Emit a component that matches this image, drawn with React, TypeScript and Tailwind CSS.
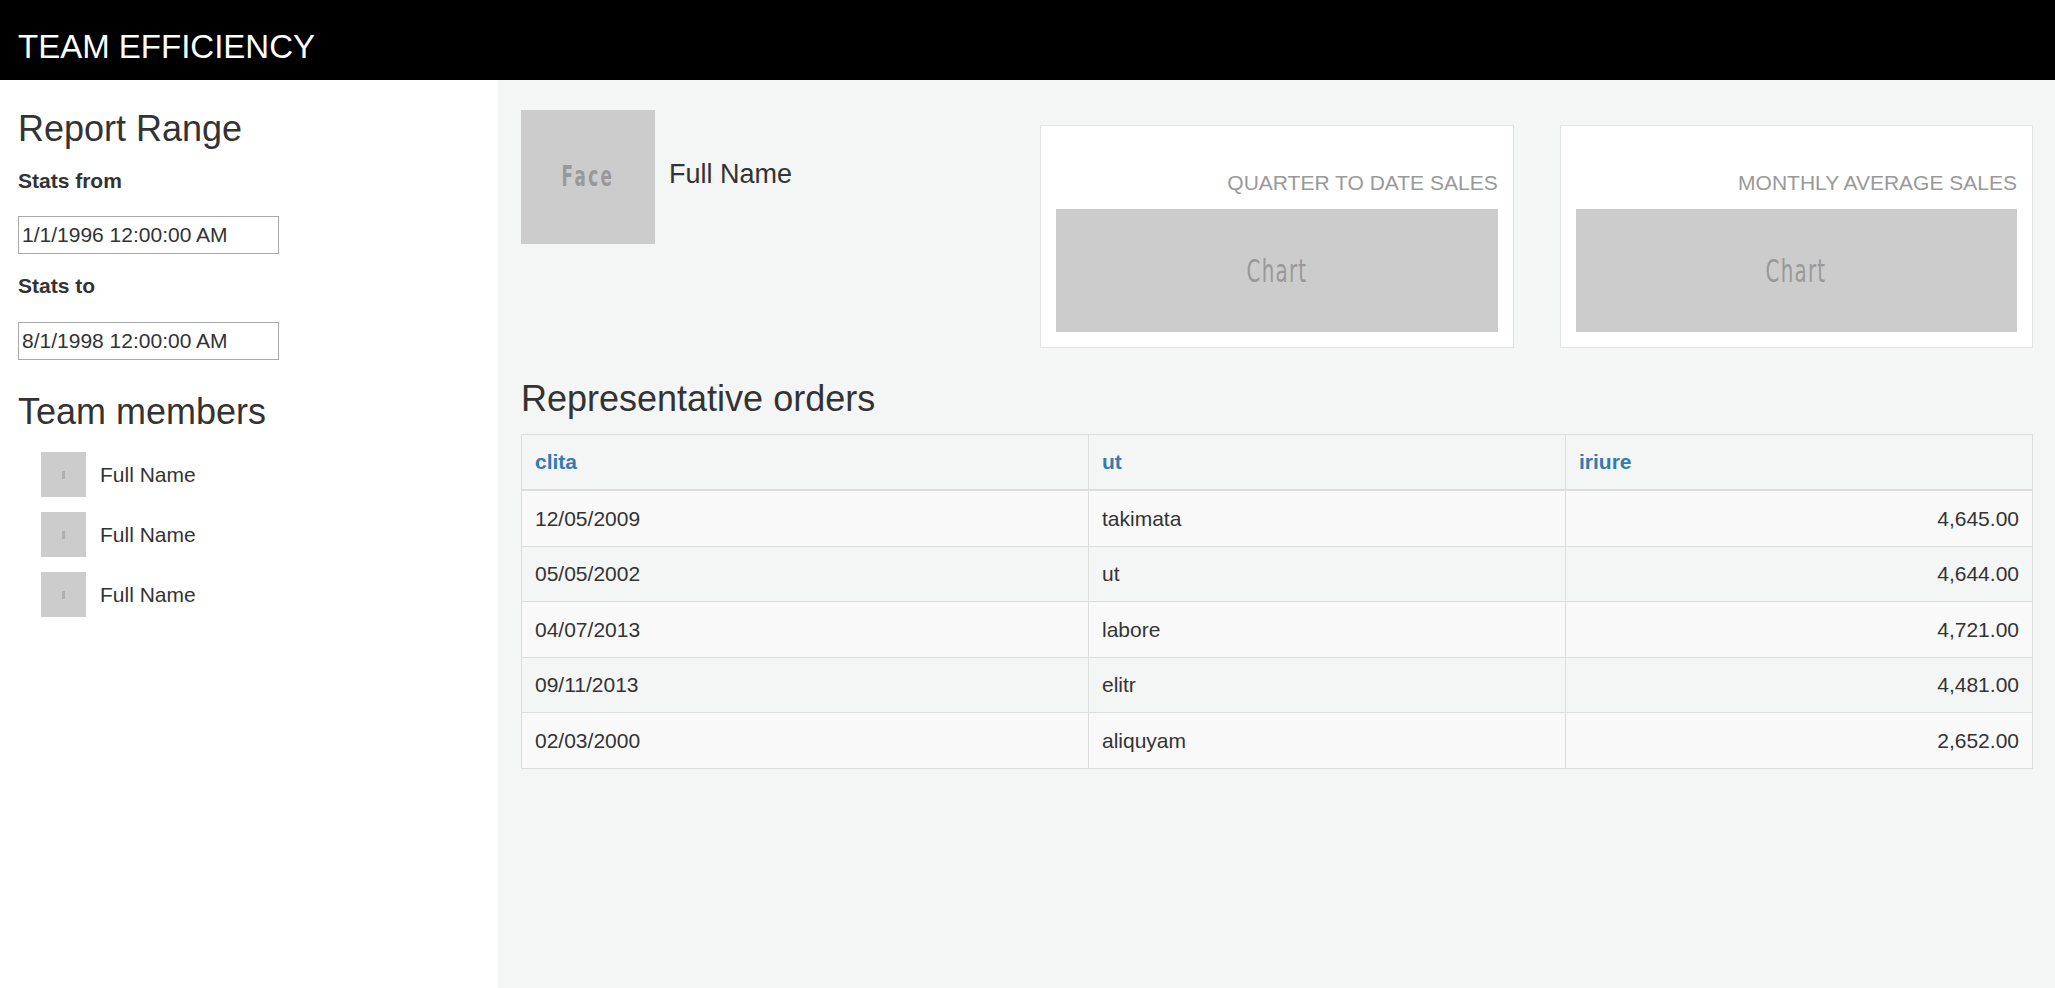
import React from "react";

const members = ["Full Name", "Full Name", "Full Name"];

const orders = [
  { date: "12/05/2009", word: "takimata", amount: "4,645.00", h: "h-[56px]", bg: "bg-[#f9f9f9]" },
  { date: "05/05/2002", word: "ut", amount: "4,644.00", h: "h-[55px]", bg: "" },
  { date: "04/07/2013", word: "labore", amount: "4,721.00", h: "h-[56px]", bg: "bg-[#f9f9f9]" },
  { date: "09/11/2013", word: "elitr", amount: "4,481.00", h: "h-[55px]", bg: "" },
  { date: "02/03/2000", word: "aliquyam", amount: "2,652.00", h: "h-[56px]", bg: "bg-[#f9f9f9]" },
];

function StatCard({ title }: { title: string }) {
  return (
    <div className="mt-[15px] flex flex-col border border-[#e3e3e3] bg-white px-[15px] pb-[15px] pt-[42px]">
      <div className="text-right text-[21px] leading-[30px] uppercase text-[#999]">{title}</div>
      <div className="mt-[11px] flex h-[123px] items-center justify-center bg-[#cccccc]">
        <span className="inline-block scale-x-[0.62] font-['DejaVu_Sans',sans-serif] text-[32px] tracking-[2px] text-[#999]">
          Chart
        </span>
      </div>
    </div>
  );
}

export default function App() {
  return (
    <div className="flex h-screen flex-col font-['Liberation_Sans',Arial,sans-serif] text-[#333]">
      <header className="h-[80px] shrink-0 bg-black pl-[18px] pt-[28px]">
        <h1 className="text-[33px] leading-[38px] text-white">TEAM EFFICIENCY</h1>
      </header>

      <div className="flex flex-1">
        {/* sidebar */}
        <aside className="w-[498px] shrink-0 bg-white px-[18px]">
          <h2 className="mt-[29px] text-[36px] leading-[40px]">Report Range</h2>
          <label className="mt-[17px] block text-[21px] font-bold leading-[30px]">Stats from</label>
          <input
            className="mt-[20px] block h-[38px] w-[261px] border border-[#a9a9a9] bg-white pl-[3px] text-[21px] text-[#333] outline-none"
            defaultValue="1/1/1996 12:00:00 AM"
          />
          <label className="mt-[17px] block text-[21px] font-bold leading-[30px]">Stats to</label>
          <input
            className="mt-[21px] block h-[38px] w-[261px] border border-[#a9a9a9] bg-white pl-[3px] text-[21px] text-[#333] outline-none"
            defaultValue="8/1/1998 12:00:00 AM"
          />

          <h2 className="mt-[32px] text-[36px] leading-[40px]">Team members</h2>
          <ul className="ml-[23px] mt-[20px] flex flex-col gap-[15px]">
            {members.map((m, i) => (
              <li key={i} className="flex items-center gap-[14px]">
                <div className="flex h-[45px] w-[45px] items-center justify-center bg-[#cccccc]">
                  <div className="h-[8px] w-[3px] bg-[#b0b0b0]" />
                </div>
                <span className="text-[21px] leading-[30px]">{m}</span>
              </li>
            ))}
          </ul>
        </aside>

        {/* main */}
        <main className="flex-1 bg-[#f4f5f5] pl-[23px] pr-[22px] pt-[30px]">
          <div className="grid grid-cols-3 gap-x-[46px]">
            <div className="flex items-center self-start">
              <div className="flex h-[134px] w-[134px] items-center justify-center bg-[#cccccc]">
                <span className="inline-block scale-x-[0.6] font-['DejaVu_Sans',sans-serif] text-[28px] font-bold tracking-[4px] text-[#999]">
                  Face
                </span>
              </div>
              <span className="ml-[14px] pb-[5px] text-[27px]">Full Name</span>
            </div>
            <StatCard title="Quarter to date sales" />
            <StatCard title="Monthly average sales" />
          </div>

          <h2 className="mt-[31px] text-[36px] leading-[40px]">Representative orders</h2>

          <div className="mt-[15px] border-x border-t border-[#ddd] text-[21px]">
            <div className="grid h-[56px] grid-cols-[567px_477px_1fr] border-b-2 border-[#ddd] font-bold text-[#337ab7]">
              <div className="flex items-center border-r border-[#ddd] px-[13px]">clita</div>
              <div className="flex items-center border-r border-[#ddd] px-[13px]">ut</div>
              <div className="flex items-center px-[13px]">iriure</div>
            </div>
            {orders.map((o) => (
              <div
                key={o.date}
                className={`grid grid-cols-[567px_477px_1fr] border-b border-[#ddd] ${o.h} ${o.bg}`}
              >
                <div className="flex items-center border-r border-[#ddd] px-[13px]">{o.date}</div>
                <div className="flex items-center border-r border-[#ddd] px-[13px]">{o.word}</div>
                <div className="flex items-center justify-end px-[13px]">{o.amount}</div>
              </div>
            ))}
          </div>
        </main>
      </div>
    </div>
  );
}
